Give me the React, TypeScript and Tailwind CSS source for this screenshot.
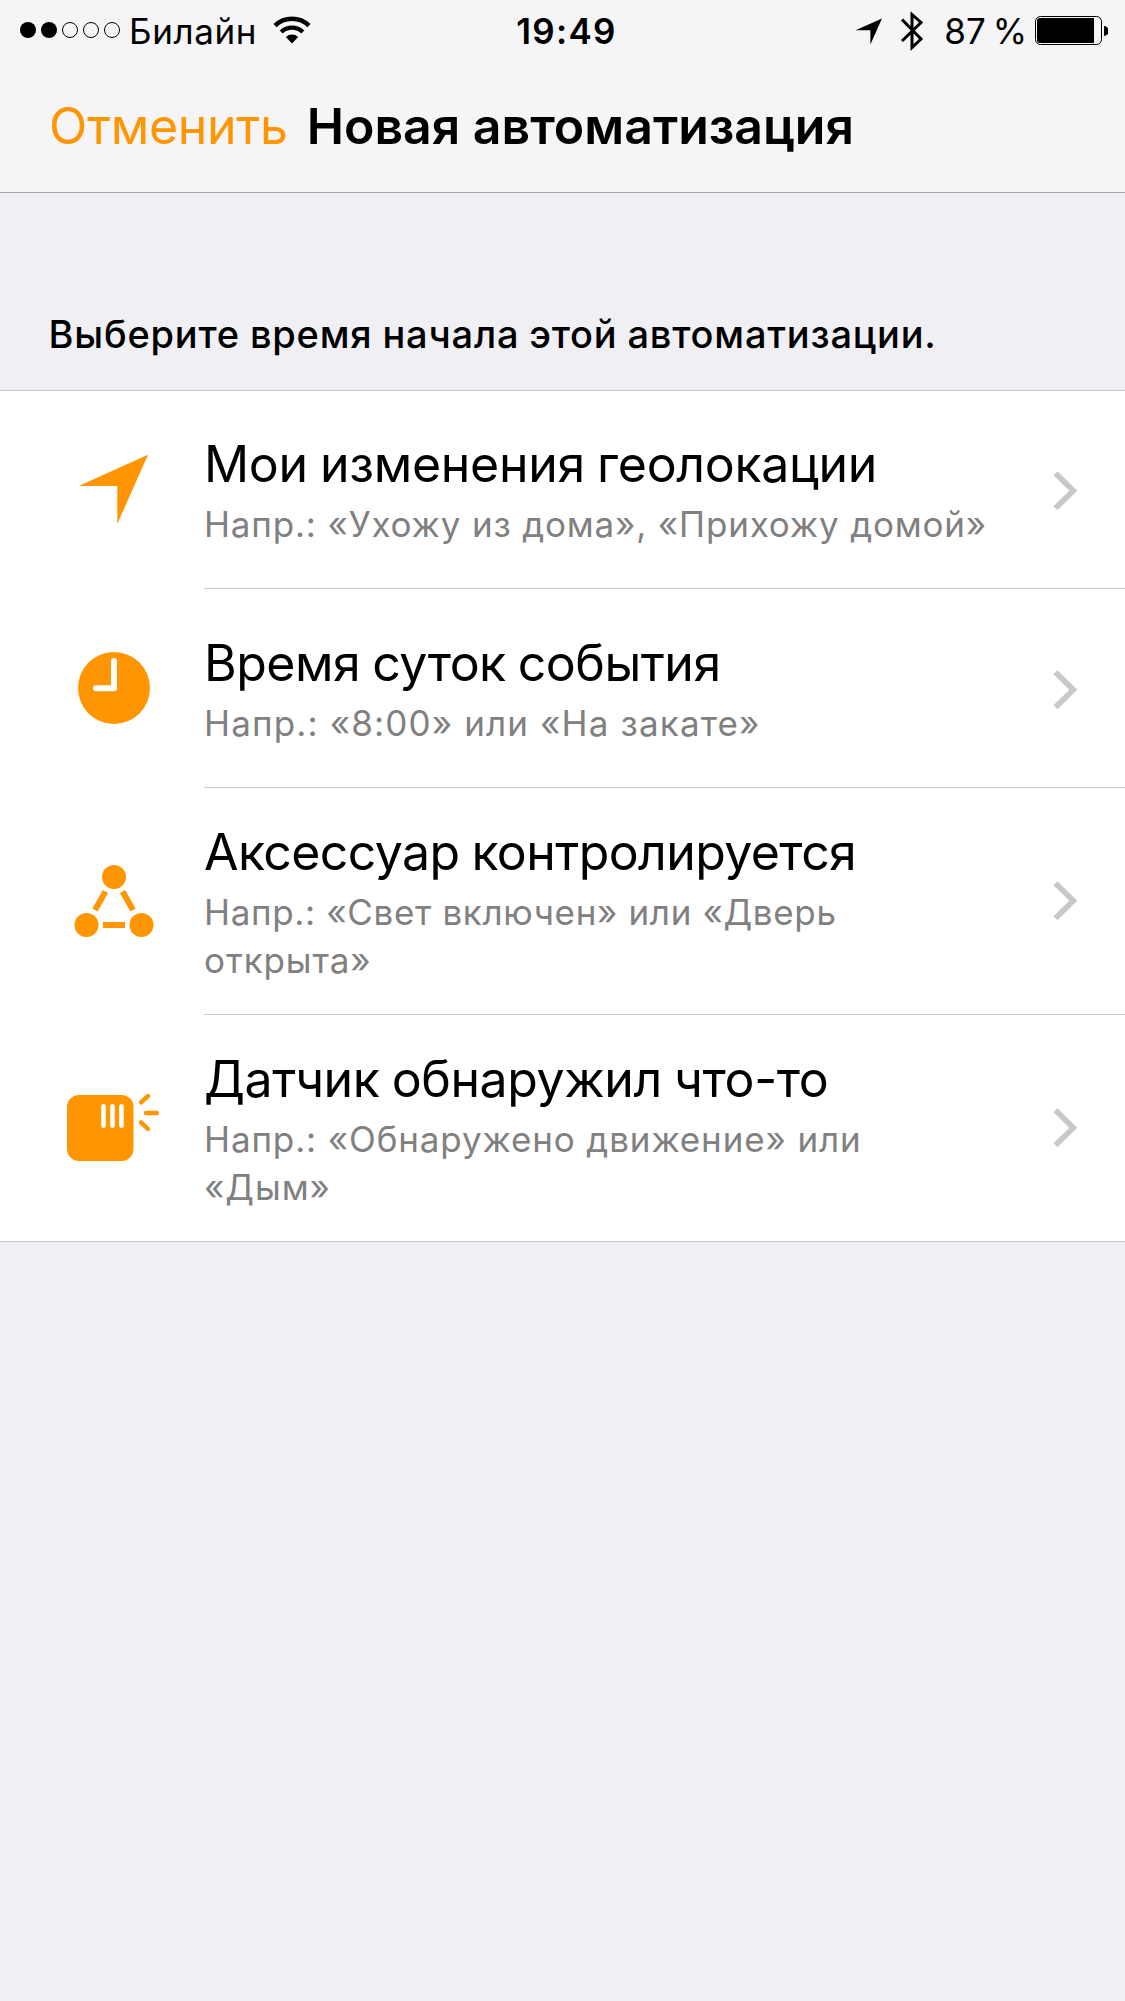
import type { ReactNode } from "react";

interface Line {
  text: string;
  tracking: string;
}

interface Trigger {
  title: Line;
  lines: Line[];
  icon: ReactNode;
}

const LocationIcon = () => (
  <svg viewBox="0 0 96 72" className="h-[72px] w-24" fill="#ff9500">
    <path d="M82 1.7 51.3 71V33H12.7Z" />
  </svg>
);

const ClockIcon = () => (
  <svg viewBox="0 0 96 72" className="h-[72px] w-24">
    <circle cx="48" cy="36" r="36" fill="#ff9500" />
    <path
      d="M48 9v27.2H30"
      fill="none"
      stroke="#fff"
      strokeWidth="6"
      strokeLinecap="round"
      strokeLinejoin="round"
    />
  </svg>
);

const AccessoryIcon = () => (
  <svg viewBox="0 0 96 72" className="h-[72px] w-24" fill="#ff9500">
    <circle cx="48" cy="12" r="12" />
    <circle cx="20.5" cy="60" r="12" />
    <circle cx="75.5" cy="60" r="12" />
    <path
      d="M39.5 26.5 29 45M56.5 26.5 67 45M37 60h22"
      stroke="#ff9500"
      strokeWidth="6"
    />
  </svg>
);

const SensorIcon = () => (
  <svg viewBox="0 0 96 72" className="h-[72px] w-24 overflow-visible">
    <rect x="1" y="3" width="66.5" height="66" rx="12" fill="#ff9500" />
    <path
      d="M37.5 14.2v19.6M46.5 14.2v19.6M55.5 14.2v19.6"
      stroke="#fff"
      strokeWidth="4.6"
      strokeLinecap="round"
    />
    <path
      d="M75 10.3 82 4M80 21h10.8M75 30.3 82 37"
      stroke="#ff9500"
      strokeWidth="4.4"
      strokeLinecap="round"
    />
  </svg>
);

const triggers: Trigger[] = [
  {
    title: { text: "Мои изменения геолокации", tracking: "tracking-[-0.3px]" },
    lines: [
      { text: "Напр.: «Ухожу из дома», «Прихожу домой»", tracking: "tracking-[0.82px]" },
    ],
    icon: <LocationIcon />,
  },
  {
    title: { text: "Время суток события", tracking: "tracking-[-0.5px]" },
    lines: [{ text: "Напр.: «8:00» или «На закате»", tracking: "tracking-[1.14px]" }],
    icon: <ClockIcon />,
  },
  {
    title: { text: "Аксессуар контролируется", tracking: "tracking-[-0.6px]" },
    lines: [
      { text: "Напр.: «Свет включен» или «Дверь", tracking: "tracking-[0.65px]" },
      { text: "открыта»", tracking: "tracking-[0.9px]" },
    ],
    icon: <AccessoryIcon />,
  },
  {
    title: { text: "Датчик обнаружил что-то", tracking: "tracking-[-0.4px]" },
    lines: [
      { text: "Напр.: «Обнаружено движение» или", tracking: "tracking-[0.87px]" },
      { text: "«Дым»", tracking: "tracking-[0.95px]" },
    ],
    icon: <SensorIcon />,
  },
];

function StatusBar() {
  return (
    <div className="grid h-[60px] grid-cols-[1fr_auto_1fr] items-center pl-5 pr-[17px] text-[35px] leading-[58px]">
      <div className="flex items-center">
        <svg viewBox="0 0 100 16" className="h-4 w-[100px]">
          <circle cx="8" cy="8" r="8" />
          <circle cx="29" cy="8" r="8" />
          <circle cx="50" cy="8" r="7.5" fill="none" stroke="#000" />
          <circle cx="71" cy="8" r="7.5" fill="none" stroke="#000" />
          <circle cx="92" cy="8" r="7.5" fill="none" stroke="#000" />
        </svg>
        <span className="ml-[9px] pt-0.5 tracking-[0.6px]">Билайн</span>
        <svg viewBox="0 0 38 28" className="ml-4 h-7 w-[38px]">
          <path
            d="M2 9.6a24.5 24.5 0 0 1 34 0M8.2 16a15.6 15.6 0 0 1 21.6 0"
            fill="none"
            stroke="#000"
            strokeWidth="4.3"
          />
          <path d="M19 27.4 12.8 21a9 9 0 0 1 12.4 0Z" />
        </svg>
      </div>
      <span className="pl-[5px] pt-0.5 font-semibold tracking-[1.3px]">19:49</span>
      <div className="flex items-center justify-end">
        <svg viewBox="0 0 27 27" className="mt-[3px] h-[27px] w-[27px]">
          <path d="M27 .5 15.4 26.5V12.2H.5Z" />
        </svg>
        <svg viewBox="0 0 24 42" className="ml-[18px] mt-0.5 h-[42px] w-6">
          <path
            d="M2 9.5 21 29 12 37.5V4.5L21 12.5 2 31"
            fill="none"
            stroke="#000"
            strokeWidth="3"
          />
        </svg>
        <span className="ml-5 whitespace-nowrap pt-0.5 [word-spacing:-3px]">87 %</span>
        <svg viewBox="0 0 73 29" className="ml-2 mt-px h-[29px] w-[73px]">
          <rect x=".5" y=".5" width="66" height="28" rx="5" fill="none" stroke="#000" />
          <path d="M5 2h54v25H5a3 3 0 0 1-3-3V5a3 3 0 0 1 3-3Z" />
          <path d="M69 10a4.5 4.8 0 0 1 0 10Z" />
        </svg>
      </div>
    </div>
  );
}

function TriggerRow({ trigger, first, last }: { trigger: Trigger; first: boolean; last: boolean }) {
  const tall = trigger.lines.length > 1;

  return (
    <li
      className={`flex ${tall ? "h-[227px]" : "h-[199px]"} ${
        first ? "shadow-[inset_0_1px_0_#c8c7cc]" : ""
      } ${last ? "border-b border-[#c8c7cc]" : ""}`}
    >
      <div className={`w-[204px] shrink-0 pl-[66px] ${tall ? "pt-[77px]" : "pt-[63px]"}`}>
        {trigger.icon}
      </div>
      <div
        className={`flex flex-1 justify-between pr-[47px] ${
          last ? "" : "border-b border-[#c8c7cc]"
        } ${tall ? "pt-[34px]" : "pt-11"}`}
      >
        <div className="whitespace-nowrap">
          <h2
            className={`text-[50px] leading-[60px] [word-spacing:-1.5px] ${trigger.title.tracking}`}
          >
            {trigger.title.text}
          </h2>
          <p className="mt-1.5 text-[35px] leading-[48px] text-[#808080]">
            {trigger.lines.map((line) => (
              <span key={line.text} className={`block ${line.tracking}`}>
                {line.text}
              </span>
            ))}
          </p>
        </div>
        <svg
          viewBox="0 0 25 39"
          className={`h-[39px] w-[25px] shrink-0 ${tall ? "mt-[59px]" : "mt-[37px]"}`}
        >
          <path d="M2.5 2.2 20.3 19.7 2.5 37.2" fill="none" stroke="#c7c7cc" strokeWidth="5.6" />
        </svg>
      </div>
    </li>
  );
}

export default function App() {
  return (
    <div className="min-h-[2001px] w-[1125px] bg-[#efeff4] font-['Inter','Liberation_Sans',sans-serif] text-black">
      <header className="h-[193px] border-b border-[#a7a7aa] bg-[#f5f5f7]">
        <StatusBar />
        <div className="flex items-center pl-[49px] pt-9 text-[50px] leading-[60px]">
          <button type="button" className="cursor-pointer tracking-[-0.3px] text-[#ff9500]">
            Отменить
          </button>
          <h1 className="ml-[19px] whitespace-nowrap font-semibold">Новая автоматизация</h1>
        </div>
      </header>

      <p className="h-[197px] whitespace-nowrap pl-[48.5px] pt-[117px] text-[38px] font-medium leading-[48px] tracking-[0.8px] [word-spacing:-1px]">
        Выберите время начала этой автоматизации.
      </p>

      <ul className="bg-white">
        {triggers.map((trigger, i) => (
          <TriggerRow
            key={trigger.title.text}
            trigger={trigger}
            first={i === 0}
            last={i === triggers.length - 1}
          />
        ))}
      </ul>
    </div>
  );
}
